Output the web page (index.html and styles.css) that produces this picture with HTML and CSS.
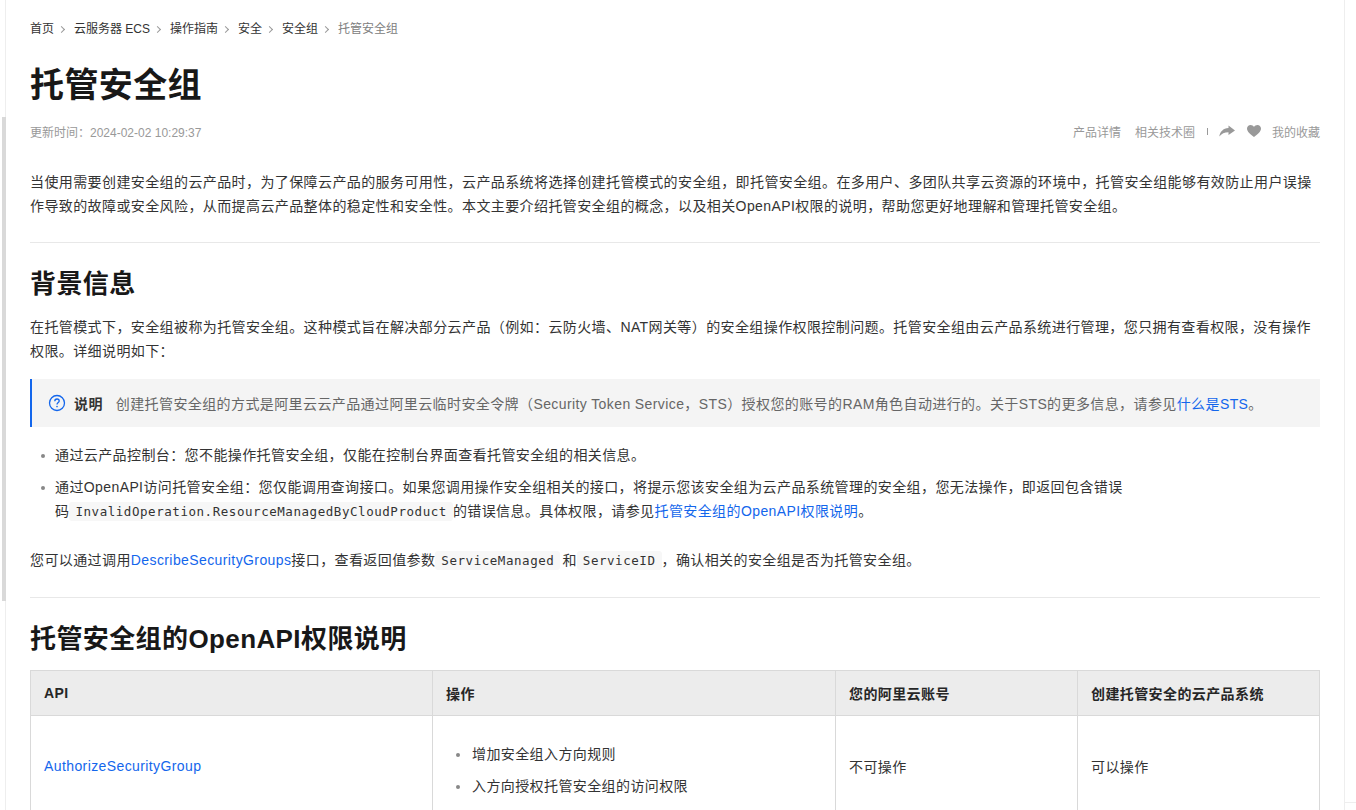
FILE: index.html
```html
<!DOCTYPE html>
<html lang="zh-CN">
<head>
	<meta charset="UTF-8">
	<title>托管安全组</title>
	<link rel="stylesheet" href="styles.css">
</head>
<body>
	<!--左侧滚动条-->
	<div class="scroll-thumb"></div>
	<div class="page">
		<div class="crumbs">
			<a>首页</a><span class="sep"></span>
			<a>云服务器 ECS</a><span class="sep"></span>
			<a>操作指南</a><span class="sep"></span>
			<a>安全</a><span class="sep"></span>
			<a>安全组</a><span class="sep"></span>
			<span class="now">托管安全组</span>
		</div>
		<h1>托管安全组</h1>
		<div class="meta">
			<span>更新时间：2024-02-02 10:29:37</span>
			<div class="tools">
				<a>产品详情</a>
				<a>相关技术圈</a>
				<i class="bar"></i>
				<svg class="share" width="16" height="12" viewBox="0 0 16 12"><path d="M9.5 0.5L16 5.5L9.5 10V7.2C5.5 7.2 2.5 8.6 0.3 11.5C1 6.8 4 3.4 9.5 3Z" fill="#999"/></svg>
				<svg class="heart" width="14" height="12" viewBox="0 0 14 12"><path d="M7 12C3.5 9.3 0 6.9 0 3.6C0 1.5 1.6 0 3.6 0C5 0 6.2 0.7 7 1.9C7.8 0.7 9 0 10.4 0C12.4 0 14 1.5 14 3.6C14 6.9 10.5 9.3 7 12Z" fill="#999"/></svg>
				<a>我的收藏</a>
			</div>
		</div>
		<p class="intro">当使用需要创建安全组的云产品时，为了保障云产品的服务可用性，云产品系统将选择创建托管模式的安全组，即托管安全组。在多用户、多团队共享云资源的环境中，托管安全组能够有效防止用户误操作导致的故障或安全风险，从而提高云产品整体的稳定性和安全性。本文主要介绍托管安全组的概念，以及相关OpenAPI权限的说明，帮助您更好地理解和管理托管安全组。</p>
		<h2>背景信息</h2>
		<p>在托管模式下，安全组被称为托管安全组。这种模式旨在解决部分云产品（例如：云防火墙、NAT网关等）的安全组操作权限控制问题。托管安全组由云产品系统进行管理，您只拥有查看权限，没有操作权限。详细说明如下：</p>
		<div class="note">
			<svg width="18" height="18" viewBox="0 0 18 18"><circle cx="9" cy="9" r="7.5" fill="none" stroke="#1366ec" stroke-width="1.3"/><path d="M6.8 7.2C6.8 5.9 7.8 5 9 5C10.3 5 11.2 5.9 11.2 7C11.2 8.4 9 8.6 9 10.4" fill="none" stroke="#1366ec" stroke-width="1.3"/><circle cx="9" cy="12.6" r="0.8" fill="#1366ec"/></svg>
			<b>说明</b>
			<span>创建托管安全组的方式是阿里云云产品通过阿里云临时安全令牌（Security Token Service，STS）授权您的账号的RAM角色自动进行的。关于STS的更多信息，请参见<a class="link">什么是STS</a>。</span>
		</div>
		<ul class="list">
			<li>通过云产品控制台：您不能操作托管安全组，仅能在控制台界面查看托管安全组的相关信息。</li>
			<li>通过OpenAPI访问托管安全组：您仅能调用查询接口。如果您调用操作安全组相关的接口，将提示您该安全组为云产品系统管理的安全组，您无法操作，即返回包含错误<br>码<code>InvalidOperation.ResourceManagedByCloudProduct</code>的错误信息。具体权限，请参见<a class="link">托管安全组的OpenAPI权限说明</a>。</li>
		</ul>
		<p class="query">您可以通过调用<a class="link">DescribeSecurityGroups</a>接口，查看返回值参数<code class="gap">ServiceManaged</code>和<code>ServiceID</code>，确认相关的安全组是否为托管安全组。</p>
		<h2>托管安全组的OpenAPI权限说明</h2>
		<table>
			<tr>
				<th class="c1">API</th>
				<th class="c2">操作</th>
				<th class="c3">您的阿里云账号</th>
				<th>创建托管安全的云产品系统</th>
			</tr>
			<tr>
				<td><a class="link">AuthorizeSecurityGroup</a></td>
				<td>
					<ul class="cell-list">
						<li>增加安全组入方向规则</li>
						<li>入方向授权托管安全组的访问权限</li>
					</ul>
				</td>
				<td>不可操作</td>
				<td>可以操作</td>
			</tr>
		</table>
	</div>
	<div class="corner"></div>
</body>
</html>
```

FILE: styles.css
```css
*{
	margin:0px;
	padding:0px;
	box-sizing:border-box;
}
html,body{
	height:810px;
	overflow:hidden;
}
body{
	background:#fff;
	color:#333;
	font-family:"Liberation Sans","Noto Sans CJK SC",sans-serif;
	font-size:14px;
}
ul li{
	list-style:none;
}
.page{
	width:1340px;
	margin-left:5px;
	padding:20px 24px 0 24px;
	border-left:1px solid #eee;
	border-right:1px solid #eee;
	min-height:810px;
	letter-spacing:.4px;
}
.scroll-thumb{
	position:absolute;
	left:2px;
	top:117px;
	width:4px;
	height:484px;
	background:#d9d9d9;
}
.corner{
	position:absolute;
	left:1345px;
	top:802px;
	width:11px;
	height:1px;
	background:#eee;
}

/*面包屑*/
.crumbs{
	display:flex;
	align-items:center;
	height:18px;
	font-size:12px;
	line-height:18px;
	color:#333;
	letter-spacing:0;
}
.crumbs .sep{
	width:5px;
	height:5px;
	margin:0 10px 0 5px;
	border-top:1px solid #999;
	border-right:1px solid #999;
	transform:rotate(45deg);
}
.crumbs .now{
	color:#808080;
}

h1{
	margin-top:22px;
	font-size:34px;
	line-height:50px;
	font-weight:700;
	color:#181818;
}
.meta{
	display:flex;
	justify-content:space-between;
	align-items:center;
	height:18px;
	margin-top:12px;
	font-size:12px;
	color:#999;
	letter-spacing:0;
}
.tools{
	display:flex;
	align-items:center;
}
.tools a{
	margin-right:14px;
}
.tools a:last-child{
	margin-right:0;
}
.tools .bar{
	width:1px;
	height:7px;
	margin:0 11px 0 -2px;
	background:#999;
}
.tools .share{
	margin-right:12px;
}
.tools .heart{
	margin-right:11px;
}

p{
	line-height:24px;
	color:#333;
}
.intro{
	margin-top:30px;
	padding-bottom:24px;
	border-bottom:1px solid #e8e8e8;
}
h2{
	font-size:26px;
	line-height:36px;
	font-weight:700;
	color:#181818;
	margin-top:23px;
	margin-bottom:13px;
}
.link{
	color:#1366ec;
}

/*说明*/
.note{
	display:flex;
	align-items:center;
	height:48px;
	margin-top:16px;
	padding-left:16px;
	background:#f4f4f4;
	border-left:2px solid #1366ec;
	color:#666;
}
.note svg{
	margin-right:8px;
}
.note b{
	margin-right:13px;
	color:#333;
}

.list{
	margin-top:16px;
	padding-left:25px;
	line-height:24px;
}
.list li,.cell-list li{
	position:relative;
}
.list li{
	margin-bottom:8px;
}
.list li:last-child{
	margin-bottom:0;
}
.list li:before,.cell-list li:before{
	content:"";
	position:absolute;
	left:-14px;
	top:11px;
	width:4px;
	height:4px;
	border-radius:50%;
	background:#888;
}
.cell-list li:before{
	left:-16px;
}
code{
	padding:2px 6px;
	border-radius:3px;
	background:#f7f7f7;
	font-family:"DejaVu Sans Mono",monospace;
	font-size:12.5px;
	letter-spacing:.55px;
}
code.gap{
	margin-right:2px;
}
.query{
	margin-top:24px;
	padding-bottom:24px;
	border-bottom:1px solid #e8e8e8;
}

/*表格*/
table{
	width:1290px;
	border-collapse:collapse;
	table-layout:fixed;
}
th,td{
	border:1px solid #d9d9d9;
	padding:0 13px;
	text-align:left;
	color:#333;
	vertical-align:middle;
}
th{
	height:45px;
	background:#ececec;
	font-weight:700;
	color:#262626;
}
td{
	height:101px;
}
.c1{
	width:402px;
}
.c2{
	width:403px;
}
.c3{
	width:242px;
}
.cell-list{
	margin-top:8px;
	padding-left:26px;
	line-height:24px;
}
.cell-list li{
	margin-bottom:8px;
}
.cell-list li:last-child{
	margin-bottom:0;
}
```
